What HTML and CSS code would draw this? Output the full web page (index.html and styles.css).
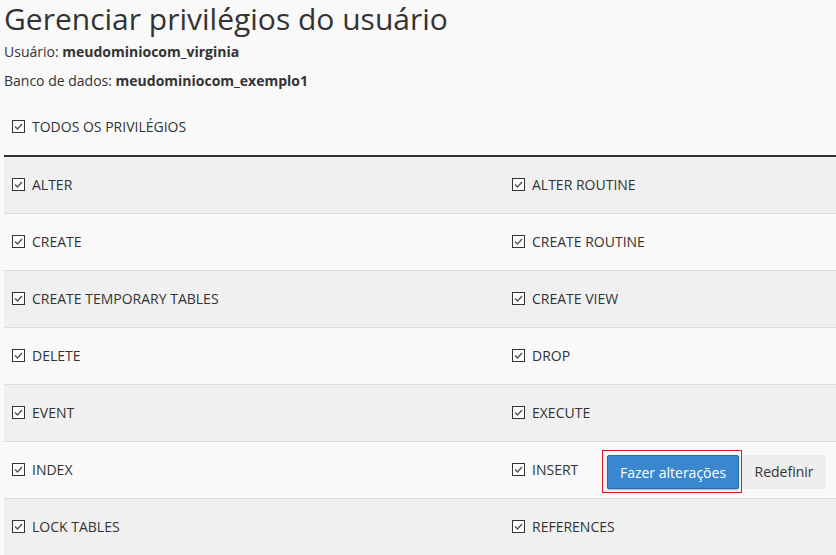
FILE: index.html
```html
<!DOCTYPE html>
<html lang="pt-BR">
<head>
<meta charset="utf-8">
<title>Gerenciar privilégios do usuário</title>
<link rel="stylesheet" href="styles.css">
</head>
<body>
<div class="page">
  <h1 class="title">Gerenciar privilégios do usuário</h1>
  <p class="meta">Usuário: <b>meudominiocom_virginia</b></p>
  <p class="meta">Banco de dados: <b>meudominiocom_exemplo1</b></p>
  <label class="all"><span class="cb"><svg viewBox="0 0 13 13" width="13" height="13"><rect x="0.5" y="0.5" width="12" height="12" fill="#fff" stroke="#333"/><path d="M3 6.5 L5.5 9 L10 4" fill="none" stroke="#555" stroke-width="1.5"/></svg></span>TODOS OS PRIVILÉGIOS</label>

  <div class="table">
    <div class="row odd">
      <div class="cell"><span class="cb"><svg viewBox="0 0 13 13" width="13" height="13"><rect x="0.5" y="0.5" width="12" height="12" fill="#fff" stroke="#333"/><path d="M3 6.5 L5.5 9 L10 4" fill="none" stroke="#555" stroke-width="1.5"/></svg></span>ALTER</div>
      <div class="cell"><span class="cb"><svg viewBox="0 0 13 13" width="13" height="13"><rect x="0.5" y="0.5" width="12" height="12" fill="#fff" stroke="#333"/><path d="M3 6.5 L5.5 9 L10 4" fill="none" stroke="#555" stroke-width="1.5"/></svg></span>ALTER ROUTINE</div>
    </div>
    <div class="row even">
      <div class="cell"><span class="cb"><svg viewBox="0 0 13 13" width="13" height="13"><rect x="0.5" y="0.5" width="12" height="12" fill="#fff" stroke="#333"/><path d="M3 6.5 L5.5 9 L10 4" fill="none" stroke="#555" stroke-width="1.5"/></svg></span>CREATE</div>
      <div class="cell"><span class="cb"><svg viewBox="0 0 13 13" width="13" height="13"><rect x="0.5" y="0.5" width="12" height="12" fill="#fff" stroke="#333"/><path d="M3 6.5 L5.5 9 L10 4" fill="none" stroke="#555" stroke-width="1.5"/></svg></span>CREATE ROUTINE</div>
    </div>
    <div class="row odd">
      <div class="cell"><span class="cb"><svg viewBox="0 0 13 13" width="13" height="13"><rect x="0.5" y="0.5" width="12" height="12" fill="#fff" stroke="#333"/><path d="M3 6.5 L5.5 9 L10 4" fill="none" stroke="#555" stroke-width="1.5"/></svg></span>CREATE TEMPORARY TABLES</div>
      <div class="cell"><span class="cb"><svg viewBox="0 0 13 13" width="13" height="13"><rect x="0.5" y="0.5" width="12" height="12" fill="#fff" stroke="#333"/><path d="M3 6.5 L5.5 9 L10 4" fill="none" stroke="#555" stroke-width="1.5"/></svg></span>CREATE VIEW</div>
    </div>
    <div class="row even">
      <div class="cell"><span class="cb"><svg viewBox="0 0 13 13" width="13" height="13"><rect x="0.5" y="0.5" width="12" height="12" fill="#fff" stroke="#333"/><path d="M3 6.5 L5.5 9 L10 4" fill="none" stroke="#555" stroke-width="1.5"/></svg></span>DELETE</div>
      <div class="cell"><span class="cb"><svg viewBox="0 0 13 13" width="13" height="13"><rect x="0.5" y="0.5" width="12" height="12" fill="#fff" stroke="#333"/><path d="M3 6.5 L5.5 9 L10 4" fill="none" stroke="#555" stroke-width="1.5"/></svg></span>DROP</div>
    </div>
    <div class="row odd">
      <div class="cell"><span class="cb"><svg viewBox="0 0 13 13" width="13" height="13"><rect x="0.5" y="0.5" width="12" height="12" fill="#fff" stroke="#333"/><path d="M3 6.5 L5.5 9 L10 4" fill="none" stroke="#555" stroke-width="1.5"/></svg></span>EVENT</div>
      <div class="cell"><span class="cb"><svg viewBox="0 0 13 13" width="13" height="13"><rect x="0.5" y="0.5" width="12" height="12" fill="#fff" stroke="#333"/><path d="M3 6.5 L5.5 9 L10 4" fill="none" stroke="#555" stroke-width="1.5"/></svg></span>EXECUTE</div>
    </div>
    <div class="row even">
      <div class="cell"><span class="cb"><svg viewBox="0 0 13 13" width="13" height="13"><rect x="0.5" y="0.5" width="12" height="12" fill="#fff" stroke="#333"/><path d="M3 6.5 L5.5 9 L10 4" fill="none" stroke="#555" stroke-width="1.5"/></svg></span>INDEX</div>
      <div class="cell"><span class="cb"><svg viewBox="0 0 13 13" width="13" height="13"><rect x="0.5" y="0.5" width="12" height="12" fill="#fff" stroke="#333"/><path d="M3 6.5 L5.5 9 L10 4" fill="none" stroke="#555" stroke-width="1.5"/></svg></span>INSERT
        <div class="actions">
          <div class="highlight"><button class="btn primary">Fazer alterações</button></div>
          <button class="btn secondary">Redefinir</button>
        </div>
      </div>
    </div>
    <div class="row odd">
      <div class="cell"><span class="cb"><svg viewBox="0 0 13 13" width="13" height="13"><rect x="0.5" y="0.5" width="12" height="12" fill="#fff" stroke="#333"/><path d="M3 6.5 L5.5 9 L10 4" fill="none" stroke="#555" stroke-width="1.5"/></svg></span>LOCK TABLES</div>
      <div class="cell"><span class="cb"><svg viewBox="0 0 13 13" width="13" height="13"><rect x="0.5" y="0.5" width="12" height="12" fill="#fff" stroke="#333"/><path d="M3 6.5 L5.5 9 L10 4" fill="none" stroke="#555" stroke-width="1.5"/></svg></span>REFERENCES</div>
    </div>
  </div>
</div>
</body>
</html>
```
FILE: styles.css
```css
html, body {
  margin: 0;
  padding: 0;
  overflow: hidden;
  background: #f9f9f9;
}
body {
  font-family: "Open Sans", "Liberation Sans", sans-serif;
  font-size: 14px;
  color: #333;
}
.page {
  padding: 0 0 0 4px;
}
.title {
  font-size: 30px;
  font-weight: 400;
  margin: 0;
  padding-top: 0;
  line-height: 38px;
  color: #333;
}
.meta {
  margin: 0;
  line-height: 19px;
  padding-top: 4px;
  padding-bottom: 6px;
}
.meta b {
  font-weight: 700;
}
.all {
  display: flex;
  align-items: center;
  height: 57px;
  padding-left: 8px;
  padding-top: 2px;
}
.cb {
  display: inline-flex;
  width: 13px;
  height: 13px;
  margin-right: 7px;
}
.table {
  border-top: 2px solid #333;
}
.row {
  display: grid;
  grid-template-columns: 500px 1fr;
  height: 56px;
  border-bottom: 1px solid #ddd;
}
.row.odd {
  background: #f0f0f0;
}
.row.even {
  background: #f9f9f9;
}
.cell {
  display: flex;
  align-items: center;
  padding-left: 8px;
  padding-bottom: 2px;
  position: relative;
}
.actions {
  position: absolute;
  left: 98px;
  top: 8px;
  display: flex;
  align-items: center;
}
.highlight {
  border: 1px solid #e0141e;
  padding: 4px 2px 3px 4px;
}
.btn {
  font-family: "Open Sans", "Liberation Sans", sans-serif;
  font-size: 14px;
  height: 34px;
  border-radius: 2px;
  cursor: pointer;
}
.primary {
  background: #3a87cf;
  color: #fff;
  border: 1px solid #2e6da4;
  width: 132px;
  box-shadow: 0 1px 2px rgba(0,0,0,0.3);
}
.secondary {
  background: #eeeeee;
  color: #333;
  border: none;
  width: 84px;
}
```
